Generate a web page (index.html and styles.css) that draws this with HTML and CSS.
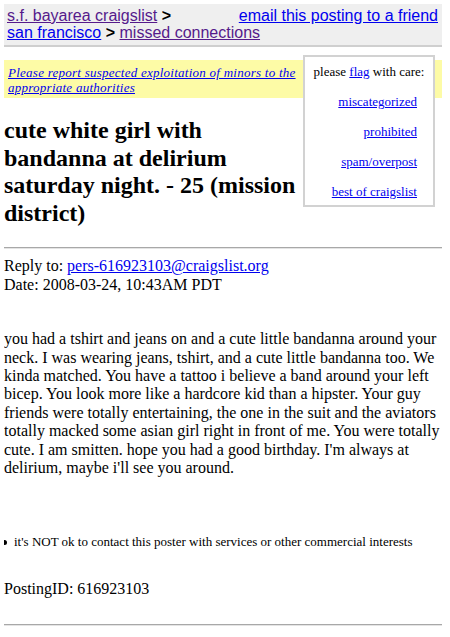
FILE: index.html
```html
<!DOCTYPE html>
<html>
<head>
<meta charset="utf-8">
<title>cute white girl with bandanna at delirium saturday night. - 25 (mission district)</title>
<link rel="stylesheet" href="styles.css">
</head>
<body>
<div class="bchead">
  <a class="ef" href="#">email this posting to a friend</a>
  <a class="visited" href="#">s.f. bayarea craigslist</a> <b>&gt;</b> <a href="#">san francisco</a> <b>&gt;</b> <a class="visited" href="#">missed connections</a>
</div>

<div class="flags">
  <div class="flag-head">please <a href="#">flag</a> with care:</div>
  <div class="flag-link"><a href="#">miscategorized</a></div>
  <div class="flag-link"><a href="#">prohibited</a></div>
  <div class="flag-link"><a href="#">spam/overpost</a></div>
  <div class="flag-link"><a href="#">best of craigslist</a></div>
</div>

<div class="highlight"><a href="#">Please report suspected exploitation of minors to the appropriate authorities</a></div>

<h2 class="title">cute white girl with bandanna at delirium saturday night. - 25 (mission district)</h2>
<hr class="rule">
<div class="meta">
  Reply to: <a href="#">pers-616923103@craigslist.org</a><br>
  Date: 2008-03-24, 10:43AM PDT
</div>

<div class="userbody">you had a tshirt and jeans on and a cute little bandanna around your neck. I was wearing jeans, tshirt, and a cute little bandanna too. We kinda matched. You have a tattoo i believe a band around your left bicep. You look more like a hardcore kid than a hipster. Your guy friends were totally entertaining, the one in the suit and the aviators totally macked some asian girl right in front of me. You were totally cute. I am smitten. hope you had a good birthday. I'm always at delirium, maybe i'll see you around.</div>

<ul class="notice">
  <li>it's NOT ok to contact this poster with services or other commercial interests</li>
</ul>

<div class="posting-id">PostingID: 616923103</div>
<hr class="rule rule-bottom">
</body>
</html>
```
FILE: styles.css
```css
html {
  background: #ffffff;
}
body {
  margin: 4px 8px 4px 4px;
  font-family: "Liberation Serif", "Times New Roman", serif;
  font-size: 16px;
  color: #000000;
}
a {
  color: #0000ee;
  text-decoration: underline;
}
a.visited {
  color: #551a8b;
}
.bchead {
  font-family: "Liberation Sans", Arial, sans-serif;
  font-size: 16px;
  line-height: 17.5px;
  background: #efefef;
  border-bottom: 2px solid #cfcfcf;
  padding: 2.5px 4px 3.5px 3px;
}
.bchead a {
  white-space: nowrap;
}
.bchead b {
  font-weight: bold;
}
.ef {
  float: right;
}
.flags {
  float: right;
  width: 128px;
  margin: 8px 7px 0 0;
  border: 2px solid #d2d2d2;
  background: #ffffff;
  padding: 7px 0 6px 0;
  font-size: 13px;
  line-height: 15px;
  display: flex;
  flex-direction: column;
  gap: 15px;
}
.flag-head {
  text-align: center;
}
.flag-link {
  text-align: right;
  padding-right: 16px;
}
.highlight {
  margin-top: 13px;
  background: #fdfba6;
  padding: 5px 4px 3px 4px;
  font-size: 13px;
  font-style: italic;
  line-height: 15px;
  letter-spacing: 0.25px;
}
.title {
  font-size: 24px;
  font-weight: bold;
  line-height: 27.6px;
  margin: 19px 0 20px 0;
}
.rule {
  border: 0;
  border-top: 1px solid #a8a8a8;
  border-bottom: 1px solid #e4e4e4;
  height: 0;
  margin: 8px 0;
}
.meta {
  line-height: 18.4px;
}
.userbody {
  margin-top: 36px;
  line-height: 18.4px;
}
.notice {
  margin: 57px 0 0 0;
  padding-left: 10px;
  font-size: 13px;
  line-height: 15px;
  list-style: none;
}
.notice li {
  display: flex;
  align-items: center;
  gap: 7px;
  margin-left: -12px;
}
.notice li::before {
  content: "";
  flex: none;
  width: 5px;
  height: 5px;
  border-radius: 50%;
  background: #000000;
  margin-top: 1px;
}
.posting-id {
  margin-top: 31px;
  line-height: 18.4px;
}
.rule-bottom {
  margin-top: 25px;
}
```
